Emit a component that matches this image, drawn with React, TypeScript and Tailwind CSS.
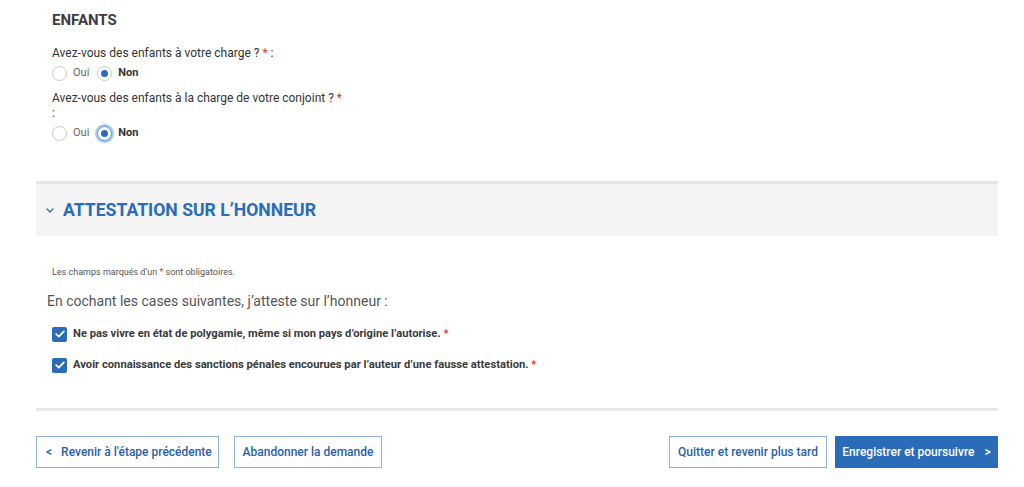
import { useState } from "react";

function Radio({ label, checked, focused }: { label: string; checked?: boolean; focused?: boolean }) {
  return (
    <label className="flex items-center gap-[6px] mr-[8px]">
      <span
        className={`w-[15px] h-[15px] rounded-full bg-white flex items-center justify-center border ${
          focused ? "border-[#5b8fd0] ring-[2px] ring-[#a9cbf2]" : "border-[#c9c9c9]"
        }`}
      >
        {checked && <span className="w-[7px] h-[7px] rounded-full bg-[#2b6cb8]" />}
      </span>
      <span className={`text-[11px] ${checked ? "font-bold text-[#333]" : "text-[#666]"}`}>{label}</span>
    </label>
  );
}

function Check({ label }: { label: string }) {
  return (
    <div className="flex items-center gap-[6px] h-[16px]">
      <span className="w-[15px] h-[15px] rounded-[2px] bg-[#2b6cb8] flex items-center justify-center">
        <svg width="10" height="8" viewBox="0 0 10 8" fill="none">
          <path d="M1.2 4.2 L3.8 6.6 L8.8 1.4" stroke="white" strokeWidth="1.8" strokeLinecap="round" strokeLinejoin="round" />
        </svg>
      </span>
      <span className="text-[11.2px] font-bold text-[#3a3a3a]">
        {label} <span className="text-[#d9342b]">*</span>
      </span>
    </div>
  );
}

export default function App() {
  const [step] = useState(0);
  return (
    <div className="w-[1024px] h-[487px] overflow-hidden bg-white font-['Roboto',sans-serif]" data-step={step}>
      <div className="ml-[36px] w-[962px]">
        <div className="px-[16px] pt-[10px]">
          <h2 className="text-[15px] leading-[20px] font-bold text-[#3d3d3d]">ENFANTS</h2>

          <p className="mt-[16px] text-[12px] leading-[15px] text-[#333]">
            Avez-vous des enfants à votre charge ? <span className="text-[#d9342b]">*</span> :
          </p>
          <div className="mt-[3px] h-[18px] flex items-center">
            <Radio label="Oui" />
            <Radio label="Non" checked />
          </div>

          <p className="mt-[9px] w-[292px] text-[12px] leading-[15px] text-[#333]">
            Avez-vous des enfants à la charge de votre conjoint ? <span className="text-[#d9342b]">*</span> :
          </p>
          <div className="mt-[3px] h-[18px] flex items-center">
            <Radio label="Oui" />
            <Radio label="Non" checked focused />
          </div>
        </div>

        <div className="mt-[39px] border-t-[3px] border-[#e6e6e6] bg-[#f4f4f4] h-[55px] flex items-center px-[10px] gap-[9px]">
          <svg width="8" height="5" viewBox="0 0 8 5" fill="none" className="mt-[1px]">
            <path d="M1 1 L4 4 L7 1" stroke="#2b6cb8" strokeWidth="1.4" strokeLinecap="round" strokeLinejoin="round" />
          </svg>
          <h2 className="text-[17.6px] font-bold text-[#2b6cb8]">ATTESTATION SUR L’HONNEUR</h2>
        </div>

        <div className="px-[16px]">
          <p className="mt-[30px] text-[9px] leading-[12px] text-[#555]">
            Les champs marqués d’un <span className="text-[#d9342b]">*</span> sont obligatoires.
          </p>
          <p className="mt-[13px] -ml-[5px] text-[14px] leading-[20px] text-[#555]">
            En cochant les cases suivantes, j’atteste sur l’honneur :
          </p>
          <div className="mt-[15px]">
            <Check label="Ne pas vivre en état de polygamie, même si mon pays d’origine l’autorise." />
          </div>
          <div className="mt-[15px]">
            <Check label="Avoir connaissance des sanctions pénales encourues par l’auteur d’une fausse attestation." />
          </div>
        </div>

        <div className="mt-[35px] h-[3px] bg-[#e8e8e8]" />

        <div className="mt-[25px] flex items-center whitespace-nowrap">
          <button className="h-[32px] w-[183px] border border-[#8fb2de] bg-white px-[9px] flex items-center gap-[9px] text-[12px] font-medium text-[#2a5fa8]">
            <span>&lt;</span>
            <span>Revenir à l'étape précédente</span>
          </button>
          <button className="ml-[15px] h-[32px] w-[148px] border border-[#8fb2de] bg-white px-[6px] flex items-center justify-center text-[12px] font-medium text-[#2a5fa8]">
            Abandonner la demande
          </button>
          <div className="ml-auto flex items-center gap-[8px]">
            <button className="h-[32px] w-[158px] border border-[#8fb2de] bg-white px-[6px] flex items-center justify-center text-[12px] font-medium text-[#2a5fa8]">
              Quitter et revenir plus tard
            </button>
            <button className="h-[32px] w-[163px] bg-[#2b6cb8] px-[6px] flex items-center justify-center gap-[10px] text-[12px] font-medium text-white">
              <span>Enregistrer et poursuivre</span>
              <span>&gt;</span>
            </button>
          </div>
        </div>
      </div>
    </div>
  );
}
